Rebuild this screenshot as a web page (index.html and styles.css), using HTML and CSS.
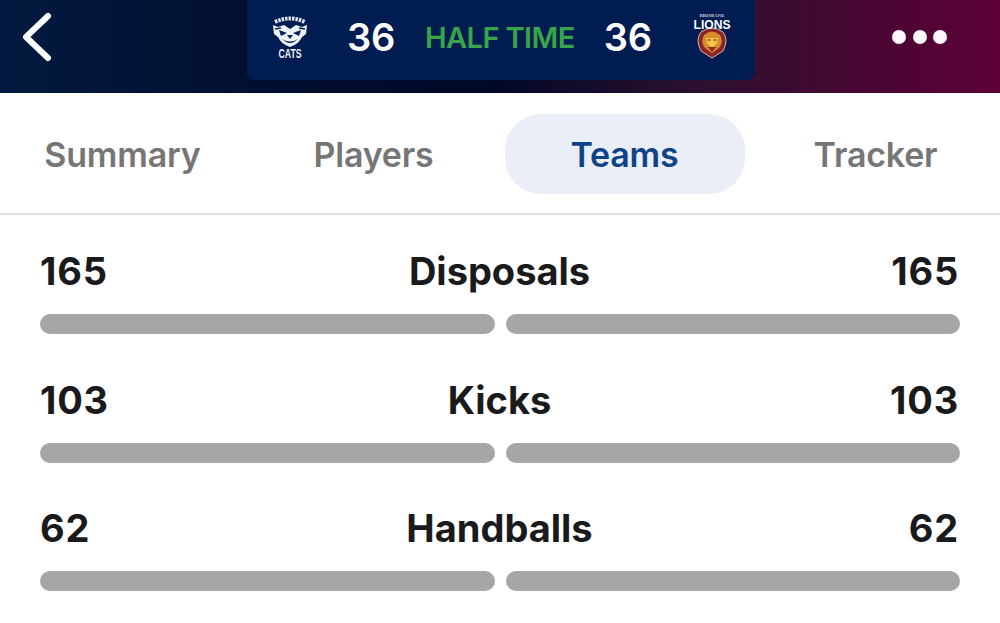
FILE: index.html
```html
<!DOCTYPE html>
<html lang="en">
<head>
<meta charset="utf-8">
<title>Match stats</title>
<link rel="stylesheet" href="styles.css">
</head>
<body>
<header class="topbar">
  <svg class="back" viewBox="0 0 32 52" width="32" height="52"><path d="M28 5 L6 26 L28 47" fill="none" stroke="#fff" stroke-width="6" stroke-linecap="round" stroke-linejoin="round"/></svg>
  <div class="score-panel">
    <svg class="crest" viewBox="0 0 36 44" width="36" height="44">
      <path d="M3 7 Q18 0 33 7" fill="none" stroke="#dfe5ef" stroke-width="4" stroke-dasharray="2.5 1"/>
      <path d="M1 10 L6 12 L12 10 L18 14 L24 10 L30 12 L35 10 L34 19 L30 22 Q27 29 18 32 Q9 29 6 22 L2 19Z" fill="#eef2f8"/>
      <path d="M7 15 L15 18 L9 21Z M29 15 L21 18 L27 21Z M10 24 Q18 29 26 24 L22 27 Q18 29 14 27Z M15 20 L21 20 L18 24Z" fill="#04205c"/>
      <path d="M3 14 L9 13 M27 13 L33 14" stroke="#04205c" stroke-width="1.5"/>
      <text x="18" y="42.500" class="cats-name" text-anchor="middle" textLength="23" lengthAdjust="spacingAndGlyphs">CATS</text>
    </svg>
    <span class="score score-home">36</span>
    <span class="status">HALF TIME</span>
    <span class="score">36</span>
    <svg class="crest crest-away" viewBox="0 0 40 48" width="40" height="48">
      <text x="20" y="3.500" class="lions-top" text-anchor="middle" textLength="25" lengthAdjust="spacingAndGlyphs">BRISBANE</text>
      <path d="M20 45 L9 38 Q3 27 9 19 Q20 11 31 19 Q37 27 31 38Z" fill="#8a2429" stroke="#d8b4a6" stroke-width="1"/>
      <path d="M12 22 Q20 15 28 22 Q32 29 27 35 L20 40 L13 35 Q8 29 12 22Z" fill="#d98a2e"/>
      <path d="M14 25 L26 25 L25 30 L20 36 L15 30Z" fill="#f2c24a"/>
      <path d="M16 34 L24 34 L20 39Z" fill="#8a2429"/>
      <path d="M15.500 27 L18.500 27 M21.500 27 L24.500 27" stroke="#6b1d1f" stroke-width="1"/>
      <text x="20" y="16" class="lions-name" text-anchor="middle" textLength="37" lengthAdjust="spacingAndGlyphs">LIONS</text>
    </svg>
  </div>
  <div class="dots"><i></i><i></i><i></i></div>
</header>

<nav class="tabs">
  <span class="tab">Summary</span>
  <span class="tab">Players</span>
  <span class="tab tab-active">Teams</span>
  <span class="tab">Tracker</span>
</nav>

<main class="stats">
  <section class="stat">
    <div class="stat-head"><span class="value">165</span><span>Disposals</span><span class="value">165</span></div>
    <div class="bars"><div class="bar"></div><div class="bar"></div></div>
  </section>
  <section class="stat">
    <div class="stat-head"><span class="value">103</span><span>Kicks</span><span class="value">103</span></div>
    <div class="bars"><div class="bar"></div><div class="bar"></div></div>
  </section>
  <section class="stat">
    <div class="stat-head"><span class="value">62</span><span>Handballs</span><span class="value">62</span></div>
    <div class="bars"><div class="bar"></div><div class="bar"></div></div>
  </section>
</main>
</body>
</html>
```
FILE: styles.css
```css
* { box-sizing: border-box; }
html, body { margin: 0; height: 100%; overflow: hidden; }
body {
  width: 1000px;
  height: 623px;
  background: #fff;
  font-family: Inter, "Liberation Sans", sans-serif;
  color: #1a1a1c;
}
.topbar {
  height: 93px;
  display: flex;
  padding: 0 53px 0 20px;
  background: linear-gradient(90deg, #031a40 0%, #010f30 24%, #020828 50%, #30102f 72%, #4a0632 88%, #5e0038 100%);
}
.back { margin-top: 11px; }
.score-panel {
  width: 508px;
  height: 80px;
  margin-left: 195px;
  display: flex;
  align-items: center;
  background: #011c50;
  border-radius: 0 0 8px 8px;
  padding: 0 0 6px 25px;
}
.crest { flex: none; overflow: visible; }
.crest-away { margin-left: 40px; }
.score-home { margin-left: 39px; }
.cats-name { font: 700 13px "Liberation Sans", sans-serif; fill: #eef2f8; }
.lions-top { font: 700 4.500px "Liberation Serif", serif; fill: #c9cfdb; }
.lions-name { font: 700 12.500px "Liberation Sans", sans-serif; fill: #fff; }
.score { font-size: 38px; font-weight: 600; color: #fff; letter-spacing: -0.2px; }
.status { font-size: 29px; font-weight: 600; color: #37a549; margin: 0 29px 0 30px; letter-spacing: -0.6px; white-space: nowrap; }
.dots { display: flex; gap: 6.500px; margin: 30px 0 0 auto; height: 14px; }
.dots i { width: 14px; height: 14px; border-radius: 50%; background: #fbf7fb; }
.tabs {
  height: 122px;
  display: grid;
  grid-template-columns: repeat(4, 251px);
  justify-content: center;
  align-items: center;
  border-bottom: 2px solid #dedede;
  padding: 2px 2px 0 0;
}
.tab {
  height: 80px;
  display: flex;
  align-items: center;
  justify-content: center;
  font-size: 34px;
  font-weight: 600;
  color: #767676;
  letter-spacing: -0.2px;
}
.tab-active {
  width: 240px;
  justify-self: center;
  border-radius: 36px;
  background: #e9eef7;
  color: #0e4389;
}
.stats { padding: 32px 40px 0; display: flex; flex-direction: column; gap: 41.500px; }
.stat-head {
  display: flex;
  justify-content: space-between;
  align-items: center;
  height: 48px;
  padding-right: 1px;
  font-size: 38px;
  font-weight: 700;
}
.value { letter-spacing: 0.8px; }
.bars { margin-top: 19px; display: flex; gap: 11px; }
.bar { flex: 1; height: 20px; border-radius: 10px; background: #a6a6a6; }
```
